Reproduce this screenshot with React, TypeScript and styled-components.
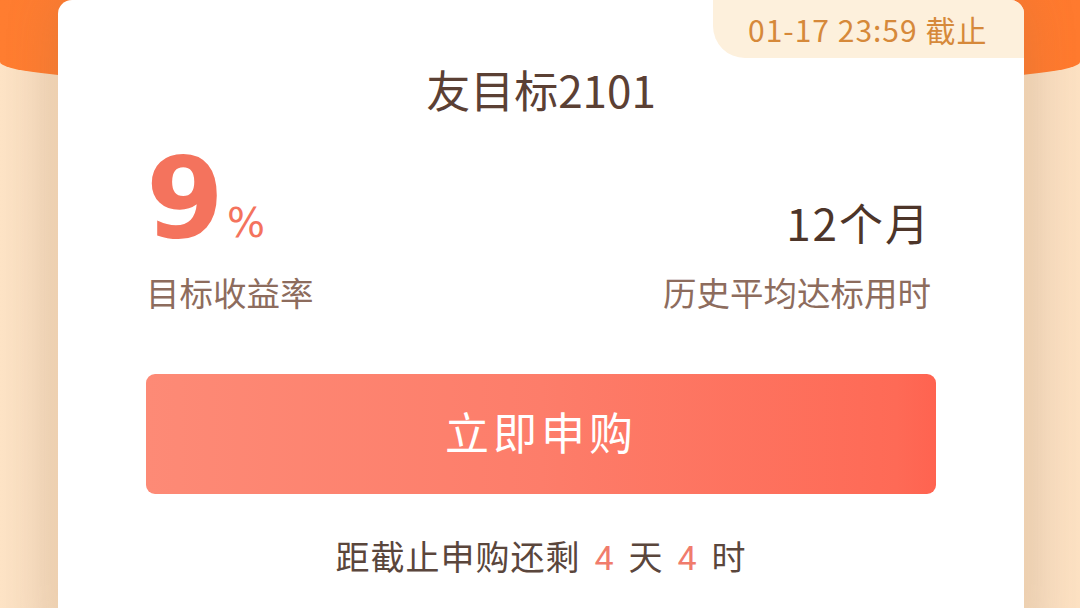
import styled, { createGlobalStyle } from 'styled-components';

const GlobalStyle = createGlobalStyle`
  html, body {
    margin: 0;
    padding: 0;
  }
  body {
    font-family: "Noto Sans CJK SC", "Noto Sans", sans-serif;
  }
`;

// page backdrop: peach with an orange banner curving along the top
const Page = styled.div`
  position: relative;
  width: 1080px;
  height: 608px;
  overflow: hidden;
  background: linear-gradient(90deg, #fde3c5 0%, #f6dcc0 4%, #fde3c5 8%, #fde3c5 92%, #f6dcc0 96%, #fde1c2 100%);

  &::before {
    content: '';
    position: absolute;
    left: 0;
    top: 0;
    width: 1080px;
    height: 91px;
    background: linear-gradient(90deg, #ff7d30 0%, #f66f33 50%, #ff7a2e 100%);
    border-bottom-left-radius: 540px 29px;
    border-bottom-right-radius: 540px 29px;
  }
`;

const Card = styled.div`
  position: relative;
  margin-left: 58px;
  width: 966px;
  min-height: 640px;
  box-sizing: border-box;
  background: #ffffff;
  border-radius: 14px 14px 0 0;
  box-shadow: 0 0 50px rgba(170, 120, 70, 0.28);
  padding: 62px 88px 0;
  display: flex;
  flex-direction: column;
`;

const Deadline = styled.div`
  position: absolute;
  top: 0;
  right: 0;
  width: 311px;
  height: 58px;
  box-sizing: border-box;
  padding-left: 35px;
  display: flex;
  align-items: center;
  background: #fdf0dc;
  border-bottom-left-radius: 32px;
  border-top-right-radius: 14px;
  color: #d6893a;
  font-size: 30px;
  letter-spacing: 1px;
`;

const Title = styled.h1`
  margin: 0;
  text-align: center;
  font-size: 44px;
  font-weight: 400;
  line-height: 54px;
  color: #5b4034;
`;

const StatRow = styled.div`
  margin-top: 41px;
  display: flex;
  justify-content: space-between;
  align-items: flex-end;
`;

const Stat = styled.div<{ $align: 'left' | 'right' }>`
  display: flex;
  flex-direction: column;
  align-items: ${(p) => (p.$align === 'left' ? 'flex-start' : 'flex-end')};
  padding-right: ${(p) => (p.$align === 'right' ? '5px' : '0')};
`;

const Rate = styled.div`
  display: flex;
  align-items: baseline;
  color: #f4735d;
`;

const RateNumber = styled.span`
  font-family: "DejaVu Sans", "Open Sans", sans-serif;
  font-size: 112px;
  font-weight: 700;
  line-height: 82px;
  letter-spacing: -2px;
`;

const RateUnit = styled.span`
  margin-left: 5px;
  font-family: "DejaVu Sans", sans-serif;
  font-size: 40px;
  font-weight: 500;
  line-height: 40px;
`;

const Duration = styled.div`
  font-size: 44px;
  line-height: 1;
  letter-spacing: 2px;
  color: #4d3529;
  margin-bottom: 16px;
`;

const StatLabel = styled.div<{ $gap: number }>`
  margin-top: ${(p) => p.$gap}px;
  font-size: 33.5px;
  line-height: 40px;
  color: #8d6c5d;
`;

const BuyButton = styled.button`
  margin-top: 62px;
  height: 120px;
  width: 100%;
  padding: 0 0 6px;
  border: none;
  border-radius: 9px;
  background: linear-gradient(90deg, #fd8a76 0%, #fd7d6a 50%, #fe6a56 95%, #ff6350 100%);
  color: #ffffff;
  font-family: "Noto Sans CJK SC", sans-serif;
  font-size: 44px;
  letter-spacing: 4px;
  cursor: pointer;
`;

const Countdown = styled.p`
  margin: 42px 0 0;
  text-align: center;
  font-size: 34px;
  line-height: 40px;
  color: #5a463c;
  letter-spacing: 1px;
`;

const Num = styled.span`
  color: #f07c6c;
  font-family: Roboto, "Noto Sans", sans-serif;
  margin: 0 14px;
`;

export default function App() {
  return (
    <>
      <GlobalStyle />
      <Page>
        <Card>
          <Deadline>01-17 23:59 截止</Deadline>
          <Title>友目标2101</Title>
          <StatRow>
            <Stat $align="left">
              <Rate>
                <RateNumber>9</RateNumber>
                <RateUnit>%</RateUnit>
              </Rate>
              <StatLabel $gap={29}>目标收益率</StatLabel>
            </Stat>
            <Stat $align="right">
              <Duration>12个月</Duration>
              <StatLabel $gap={12}>历史平均达标用时</StatLabel>
            </Stat>
          </StatRow>
          <BuyButton>立即申购</BuyButton>
          <Countdown>
            距截止申购还剩<Num>4</Num>天<Num>4</Num>时
          </Countdown>
        </Card>
      </Page>
    </>
  );
}
